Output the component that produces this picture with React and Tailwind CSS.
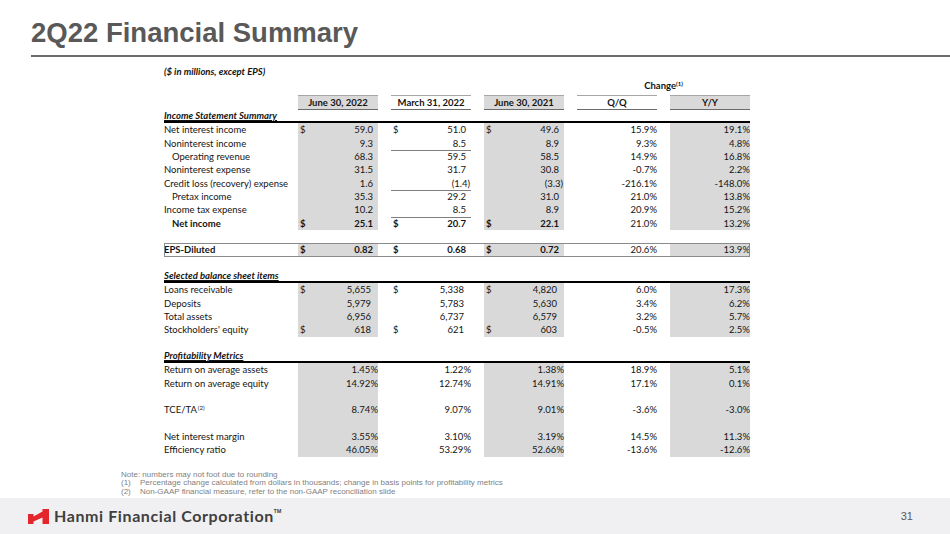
const GRID = 'grid grid-cols-[121px_80px_80px_80px_80px_80px] gap-x-[13px]'
const GRAY = 'bg-[#d9d9d9]'

const INCOME = [
  { label: 'Net interest income', vals: ['59.0', '51.0', '49.6', '15.9%', '19.1%'], dollar: true },
  { label: 'Noninterest income', vals: ['9.3', '8.5', '8.9', '9.3%', '4.8%'], under: true },
  { label: 'Operating revenue', indent: true, vals: ['68.3', '59.5', '58.5', '14.9%', '16.8%'] },
  { label: 'Noninterest expense', vals: ['31.5', '31.7', '30.8', '-0.7%', '2.2%'] },
  { label: 'Credit loss (recovery) expense', vals: ['1.6', '(1.4)', '(3.3)', '-216.1%', '-148.0%'], under: true },
  { label: 'Pretax income', indent: true, vals: ['35.3', '29.2', '31.0', '21.0%', '13.8%'] },
  { label: 'Income tax expense', vals: ['10.2', '8.5', '8.9', '20.9%', '15.2%'], under: true },
  { label: 'Net income', indent: true, bold: true, vals: ['25.1', '20.7', '22.1', '21.0%', '13.2%'], dollar: true },
]

const BALANCE = [
  { label: 'Loans receivable', vals: ['5,655', '5,338', '4,820', '6.0%', '17.3%'], dollar: true },
  { label: 'Deposits', vals: ['5,979', '5,783', '5,630', '3.4%', '6.2%'] },
  { label: 'Total assets', vals: ['6,956', '6,737', '6,579', '3.2%', '5.7%'] },
  { label: "Stockholders' equity", vals: ['618', '621', '603', '-0.5%', '2.5%'], dollar: true },
]

const PROFIT = [
  { label: 'Return on average assets', vals: ['1.45%', '1.22%', '1.38%', '18.9%', '5.1%'] },
  { label: 'Return on average equity', vals: ['14.92%', '12.74%', '14.91%', '17.1%', '0.1%'] },
  { blank: true },
  { label: 'TCE/TA', sup: '(2)', vals: ['8.74%', '9.07%', '9.01%', '-3.6%', '-3.0%'] },
  { blank: true },
  { label: 'Net interest margin', vals: ['3.55%', '3.10%', '3.19%', '14.5%', '11.3%'] },
  { label: 'Efficiency ratio', vals: ['46.05%', '53.29%', '52.66%', '-13.6%', '-12.6%'] },
]

function ValueCell({ value, dollar, gray, under, bold, pad }) {
  const right = value && value.startsWith('(') ? 'pr-[1px]' : pad
  return (
    <div
      className={`flex justify-between pl-[2px] ${right} ${gray ? GRAY : ''} ${
        under ? 'border-b border-[#7f7f7f]' : ''
      } ${bold ? 'font-bold' : ''}`}
    >
      <span>{dollar ? '$' : ''}</span>
      <span>{value}</span>
    </div>
  )
}

function Row({ row, pad = 'pr-[5px]', className = '' }) {
  if (row.blank) {
    return (
      <div className={`${GRID} h-[13.33px]`}>
        <div />
        <div className={GRAY} />
        <div />
        <div className={GRAY} />
        <div />
        <div className={GRAY} />
      </div>
    )
  }
  const [a, b, c, qq, yy] = row.vals
  return (
    <div className={`${GRID} h-[13.33px] leading-[13.33px] ${className}`}>
      <div className={`whitespace-nowrap ${row.indent ? 'pl-[8px]' : ''} ${row.bold ? 'font-bold' : ''}`}>
        {row.label}
        {row.sup && <sup className="text-[6px] ml-[1px]">{row.sup}</sup>}
      </div>
      <ValueCell value={a} dollar={row.dollar} gray under={row.under} bold={row.bold} pad={pad} />
      <ValueCell value={b} dollar={row.dollar} under={row.under} bold={row.bold} pad={pad} />
      <ValueCell value={c} dollar={row.dollar} gray under={row.under} bold={row.bold} pad={pad} />
      <div className="text-right">{qq}</div>
      <div className={`text-right ${GRAY}`}>{yy}</div>
    </div>
  )
}

function Section({ title }) {
  return (
    <div className="h-[13.33px] leading-[12px] border-b-2 border-black font-bold italic">
      <span className="underline underline-offset-[1px]">{title}</span>
    </div>
  )
}

function BlankRow() {
  return <div className="h-[13.33px]" />
}

function HeaderCell({ children, gray }) {
  return (
    <div
      className={`h-[15px] leading-[13px] text-center font-bold border-t border-[#a6a6a6] border-b border-b-[#6b6b6b] ${
        gray ? GRAY : ''
      }`}
    >
      {children}
    </div>
  )
}

function LogoMark() {
  return (
    <svg width="21" height="15" viewBox="0 0 21 15" aria-hidden="true">
      <path d="M0 5 H5.5 V7.6 L14.5 2.4 V0 H21 V15 H14.5 V8.6 L5.5 12.4 V15 H0 Z" fill="#e3262b" />
    </svg>
  )
}

export default function App() {
  return (
    <div className="relative w-[950px] h-[534px] bg-white flex flex-col overflow-hidden">
      <h1 className="pt-[19px] pl-[31px] text-[27.5px] leading-none font-bold text-[#595959] font-['Liberation_Sans',Arial,sans-serif]">
        2Q22 Financial Summary
      </h1>
      <div className="mt-[8.5px] ml-[31px] h-[2px] bg-[#6b6b6b]" />

      <div className="ml-[164px] mt-[8px] w-[586px] text-[9.5px] text-[#141414] font-[Lato,sans-serif]">
        <div className="h-[14px] leading-[14px] font-bold italic">($ in millions, except EPS)</div>
        <div className={`${GRID} h-[14px] leading-[14px]`}>
          <div className="col-start-5 col-span-2 text-center font-bold">
            Change<sup className="text-[6px]">(1)</sup>
          </div>
        </div>
        <div className={`${GRID} mt-[2px]`}>
          <div />
          <HeaderCell gray>June 30, 2022</HeaderCell>
          <HeaderCell>March 31, 2022</HeaderCell>
          <HeaderCell gray>June 30, 2021</HeaderCell>
          <HeaderCell>Q/Q</HeaderCell>
          <HeaderCell gray>Y/Y</HeaderCell>
        </div>

        <Section title="Income Statement Summary" />
        {INCOME.map((r) => (
          <Row key={r.label} row={r} />
        ))}
        <BlankRow />
        <Row
          row={{ label: 'EPS-Diluted', bold: true, dollar: true, vals: ['0.82', '0.68', '0.72', '20.6%', '13.9%'] }}
          className="outline-1 outline-[#8a8a8a] -outline-offset-1"
        />
        <BlankRow />

        <Section title="Selected balance sheet items" />
        {BALANCE.map((r) => (
          <Row key={r.label} row={r} pad="pr-[7px]" />
        ))}
        <BlankRow />

        <Section title="Profitability Metrics" />
        {PROFIT.map((r, i) => (
          <Row key={i} row={r} pad="pr-0" />
        ))}
      </div>

      <div className="ml-[121px] mt-[14px] text-[8px] leading-[8.5px] text-[#7f7f7f] font-['Liberation_Sans',Arial,sans-serif]">
        <div>Note: numbers may not foot due to rounding</div>
        <div className="flex">
          <span className="w-[19px]">(1)</span>
          <span>Percentage change calculated from dollars in thousands; change in basis points for profitability metrics</span>
        </div>
        <div className="flex">
          <span className="w-[19px]">(2)</span>
          <span>Non-GAAP financial measure, refer to the non-GAAP reconciliation slide</span>
        </div>
      </div>

      <footer className="mt-auto h-[36px] bg-[#f0f0f2] flex items-center pl-[28px] pr-[37px]">
        <LogoMark />
        <span className="ml-[5px] text-[16px] font-bold text-[#3f3f3f] font-[Lato,sans-serif] tracking-[0.6px]">
          Hanmi Financial Corporation
        </span>
        <span className="text-[5px] text-[#3f3f3f] self-start mt-[10px] font-bold">TM</span>
        <span className="ml-auto text-[11px] text-[#595959] font-['Liberation_Sans',Arial,sans-serif]">31</span>
      </footer>
    </div>
  )
}
